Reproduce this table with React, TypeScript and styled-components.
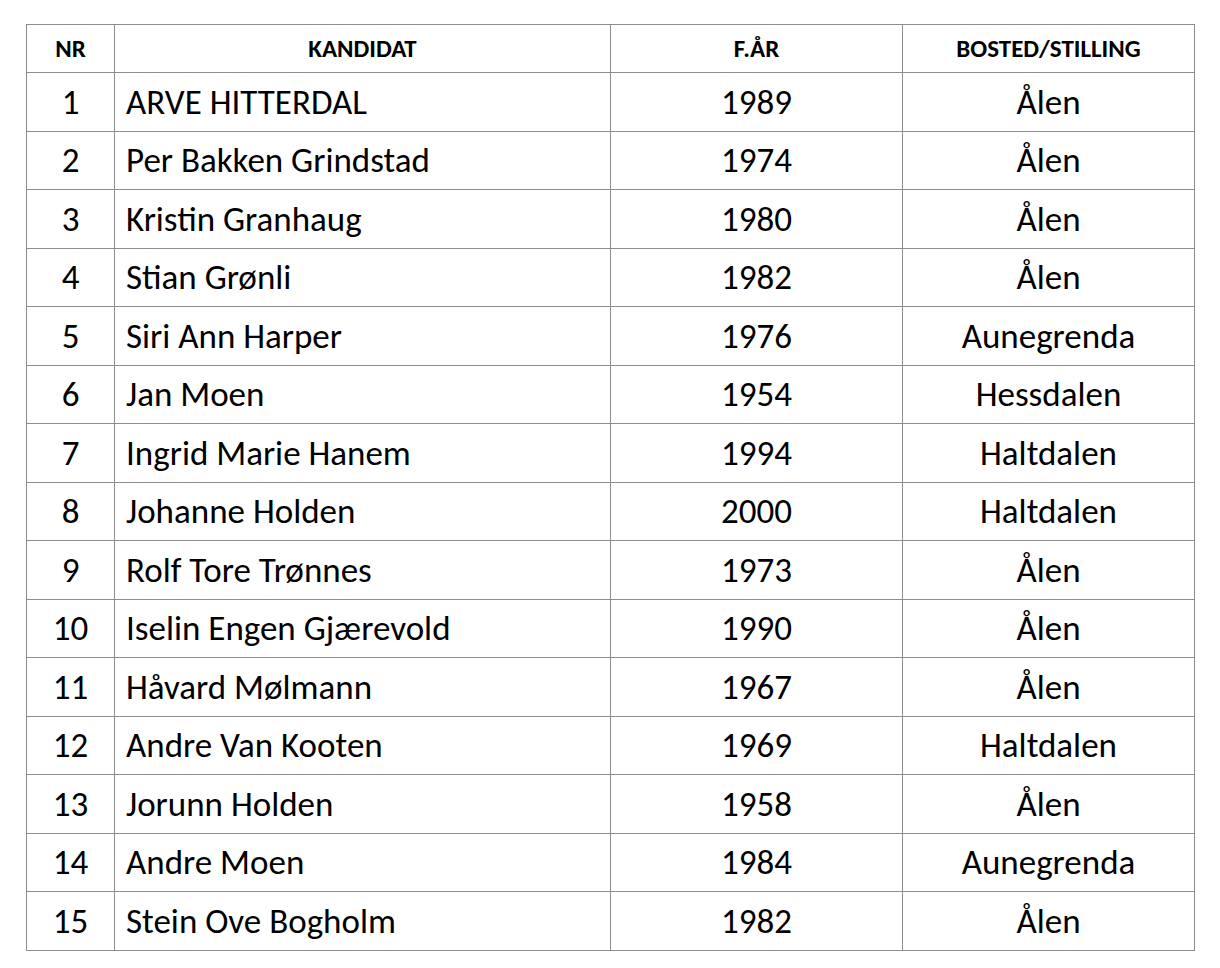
import styled, { createGlobalStyle } from "styled-components"

const GlobalStyle = createGlobalStyle`
  html, body {
    margin: 0;
    padding: 0;
    background: #ffffff;
  }
  body {
    font-family: Carlito, Calibri, Lato, "Liberation Sans", sans-serif;
    color: #000000;
  }
`

const Page = styled.div`
  padding: 24px 26px 0 26px;
`

const Table = styled.table`
  border-collapse: collapse;
  width: 1168px;
  table-layout: fixed;
`

// cell widths exclude the collapsed 1px borders
const HeadCell = styled.th<{ $width: number }>`
  width: ${(p) => p.$width}px;
  height: 47px;
  border: 1px solid #8e8e8e;
  font-size: 25px;
  font-weight: 700;
  text-align: center;
  vertical-align: middle;
  padding: 0;
`

const Row = styled.tr`
  height: 58.5px;
`

const Cell = styled.td<{ $align?: "left" | "center" }>`
  border: 1px solid #8e8e8e;
  font-size: 35px;
  text-align: ${(p) => p.$align ?? "center"};
  padding: ${(p) => (p.$align === "left" ? "0 0 0 11px" : "0")};
  vertical-align: middle;
  white-space: nowrap;
`

const candidates = [
  { name: "ARVE HITTERDAL", year: 1989, place: "Ålen" },
  { name: "Per Bakken Grindstad", year: 1974, place: "Ålen" },
  { name: "Kristin Granhaug", year: 1980, place: "Ålen" },
  { name: "Stian Grønli", year: 1982, place: "Ålen" },
  { name: "Siri Ann Harper", year: 1976, place: "Aunegrenda" },
  { name: "Jan Moen", year: 1954, place: "Hessdalen" },
  { name: "Ingrid Marie Hanem", year: 1994, place: "Haltdalen" },
  { name: "Johanne Holden", year: 2000, place: "Haltdalen" },
  { name: "Rolf Tore Trønnes", year: 1973, place: "Ålen" },
  { name: "Iselin Engen Gjærevold", year: 1990, place: "Ålen" },
  { name: "Håvard Mølmann", year: 1967, place: "Ålen" },
  { name: "Andre Van Kooten", year: 1969, place: "Haltdalen" },
  { name: "Jorunn Holden", year: 1958, place: "Ålen" },
  { name: "Andre Moen", year: 1984, place: "Aunegrenda" },
  { name: "Stein Ove Bogholm", year: 1982, place: "Ålen" },
]

const App = () => {
  return (
    <>
      <GlobalStyle />
      <Page>
        <Table>
          <thead>
            <tr>
              <HeadCell $width={87}>NR</HeadCell>
              <HeadCell $width={495}>KANDIDAT</HeadCell>
              <HeadCell $width={291}>F.ÅR</HeadCell>
              <HeadCell $width={291}>BOSTED/STILLING</HeadCell>
            </tr>
          </thead>
          <tbody>
            {candidates.map((c, i) => (
              <Row key={c.name}>
                <Cell>{i + 1}</Cell>
                <Cell $align="left">{c.name}</Cell>
                <Cell>{c.year}</Cell>
                <Cell>{c.place}</Cell>
              </Row>
            ))}
          </tbody>
        </Table>
      </Page>
    </>
  )
}

export default App
